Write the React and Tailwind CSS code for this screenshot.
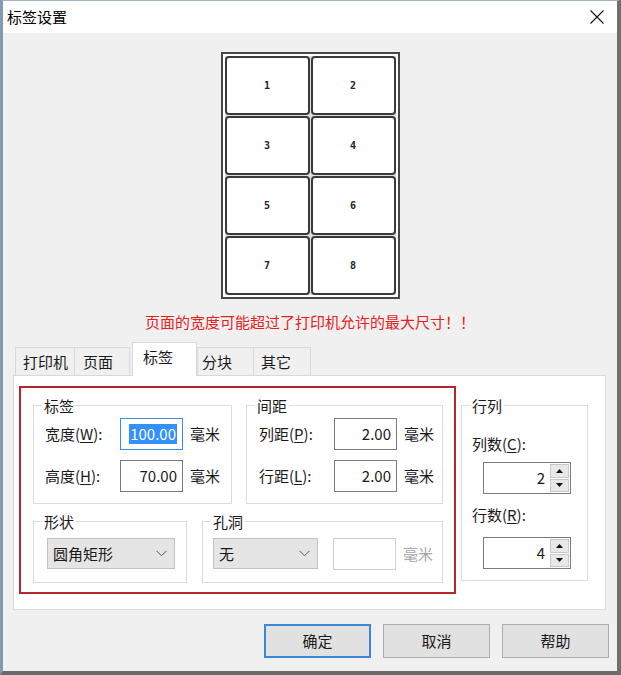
import React from "react";

const cells = [1, 2, 3, 4, 5, 6, 7, 8];

function Group({ title, className = "", children }) {
  return (
    <div className={`relative border border-[#dcdcdc] ${className}`}>
      <span className="absolute -top-[10px] left-[8px] bg-white px-[2px] text-[15px] leading-[20px] text-[#1a1a1a]">
        {title}
      </span>
      {children}
    </div>
  );
}

function Hotkey({ text, k }) {
  return (
    <span className="w-[75px] shrink-0 text-[15px] leading-[20px] text-[#1a1a1a]">
      {text}(<u className="underline-offset-2">{k}</u>):
    </span>
  );
}

function NumBox({ value, focused, selected, disabled }) {
  let border = "border-[#7a7a7a]";
  if (focused) border = "border-[#3d8ee0]";
  if (disabled) border = "border-[#d0d0d0]";
  return (
    <div
      className={`flex h-[32px] w-[63px] shrink-0 items-center justify-end border bg-white pr-[5px] text-[15px] leading-[20px] ${border}`}
    >
      {selected ? (
        <span className="bg-[#3390ff] px-[1px] text-white">{value}</span>
      ) : (
        <span className="text-[#1a1a1a]">{value}</span>
      )}
    </div>
  );
}

function Unit({ muted }) {
  return (
    <span className={`ml-[7px] text-[15px] leading-[20px] ${muted ? "text-[#a6a6a6]" : "text-[#1a1a1a]"}`}>
      毫米
    </span>
  );
}

function Chevron() {
  return (
    <svg width="11" height="7" viewBox="0 0 11 7" className="shrink-0">
      <path d="M0.5 0.8 L5.5 5.8 L10.5 0.8" fill="none" stroke="#555" strokeWidth="1" />
    </svg>
  );
}

function Combo({ text, className }) {
  return (
    <div
      className={`flex h-[31px] items-center justify-between border border-[#c2c2c2] bg-[#e5e5e5] pl-[5px] pr-[7px] text-[15px] leading-[20px] text-[#1a1a1a] ${className}`}
    >
      <span>{text}</span>
      <Chevron />
    </div>
  );
}

function Spinner({ value }) {
  return (
    <div className="ml-[11px] flex h-[32px] w-[88px] items-stretch border border-[#7a7a7a] bg-white">
      <div className="flex flex-1 items-center justify-end pr-[5px] text-[15px] leading-[20px] text-[#1a1a1a]">
        {value}
      </div>
      <div className="my-[1px] mr-[1px] flex w-[19px] flex-col gap-[1px]">
        <div className="flex flex-1 items-center justify-center border border-[#c8c8c8] bg-[#e8e8e8]">
          <svg width="7" height="4" viewBox="0 0 7 4">
            <path d="M0 4 L3.5 0 L7 4 Z" fill="#111" />
          </svg>
        </div>
        <div className="flex flex-1 items-center justify-center border border-[#c8c8c8] bg-[#e8e8e8]">
          <svg width="7" height="4" viewBox="0 0 7 4">
            <path d="M0 0 L3.5 4 L7 0 Z" fill="#111" />
          </svg>
        </div>
      </div>
    </div>
  );
}

function Tab({ label, active, className }) {
  if (active) {
    return (
      <div
        className={`relative z-10 -mb-px h-[34px] border border-b-0 border-[#d9d9d9] bg-white pt-[4px] text-[15px] leading-[20px] text-[#1a1a1a] ${className}`}
      >
        {label}
      </div>
    );
  }
  return (
    <div
      className={`h-[28px] border border-b-0 border-[#d9d9d9] bg-[#f0f0f0] pt-[4px] text-[15px] leading-[20px] text-[#1a1a1a] ${className}`}
    >
      {label}
    </div>
  );
}

function Button({ label, primary }) {
  return (
    <button
      className={`h-[34px] w-[107px] bg-[#e1e1e1] text-[15px] leading-[20px] text-[#1a1a1a] ${
        primary ? "border-2 border-[#3b86d6]" : "border border-[#adadad]"
      }`}
    >
      {label}
    </button>
  );
}

export default function App() {
  return (
    <div className="flex h-[675px] w-[621px] flex-col border-t border-l-[3px] border-r-4 border-b-4 border-t-[#9db1c7] border-l-[#8099b4] border-r-[#6f6f6f] border-b-[#6a6a6a] font-['Noto_Sans_CJK_SC',sans-serif]">
      {/* title bar */}
      <div className="flex h-[32px] shrink-0 items-center justify-between bg-white pl-[4px] pr-[13px]">
        <span className="text-[15px] leading-[20px] text-black">标签设置</span>
        <svg width="14" height="14" viewBox="0 0 14 14">
          <path d="M0.5 0.5 L13.5 13.5 M13.5 0.5 L0.5 13.5" stroke="#111" strokeWidth="1.1" />
        </svg>
      </div>

      <div className="flex flex-1 flex-col bg-[#f0f0f0]">
        {/* label sheet preview */}
        <div className="mt-[19px] self-center border-2 border-[#474747] bg-white p-[2px]">
          <div className="grid grid-cols-2 gap-[1px] bg-[#dedede]">
            {cells.map((n) => (
              <div
                key={n}
                className="flex h-[59px] w-[85px] items-center justify-center rounded-[4px] border-2 border-[#3a3a3a] bg-white font-['DejaVu_Sans_Mono',monospace] text-[10px] font-bold text-[#222]"
              >
                {n}
              </div>
            ))}
          </div>
        </div>

        <p className="mt-[13px] text-center text-[15px] leading-[20px] text-[#e5211d]">
          页面的宽度可能超过了打印机允许的最大尺寸！！
        </p>

        {/* tabs */}
        <div className="ml-[12px] mt-[10px] flex h-[33px] items-end">
          <Tab label="打印机" className="w-[60px] pl-[7px]" />
          <Tab label="页面" className="-ml-px w-[56px] pl-[8px]" />
          <Tab label="标签" active className="ml-[2px] w-[65px] pl-[10px]" />
          <Tab label="分块" className="w-[57px] pl-[4px]" />
          <Tab label="其它" className="-ml-px w-[58px] pl-[7px]" />
        </div>

        <div className="ml-[10px] mr-[11px] flex h-[235px] items-start border border-[#d9d9d9] bg-white">
          <div className="ml-[5px] mt-[10px] flex h-[208px] w-[437px] flex-col border-2 border-[#b3262e] pl-[12px] pt-[17px]">
            <div className="flex gap-[14px]">
              <Group title="标签" className="h-[99px] w-[199px] pl-[11px] pt-[12px]">
                <div className="flex items-center">
                  <Hotkey text="宽度" k="W" />
                  <NumBox value="100.00" focused selected />
                  <Unit />
                </div>
                <div className="mt-[10px] flex items-center">
                  <Hotkey text="高度" k="H" />
                  <NumBox value="70.00" />
                  <Unit />
                </div>
              </Group>
              <Group title="间距" className="h-[99px] w-[197px] pl-[12px] pt-[12px]">
                <div className="flex items-center">
                  <Hotkey text="列距" k="P" />
                  <NumBox value="2.00" />
                  <Unit />
                </div>
                <div className="mt-[10px] flex items-center">
                  <Hotkey text="行距" k="L" />
                  <NumBox value="2.00" />
                  <Unit />
                </div>
              </Group>
            </div>

            <div className="mt-[17px] flex gap-[15px]">
              <Group title="形状" className="h-[62px] w-[154px] pl-[13px] pt-[16px]">
                <Combo text="圆角矩形" className="w-[128px]" />
              </Group>
              <Group title="孔洞" className="flex h-[62px] w-[241px] items-start pl-[10px] pt-[16px]">
                <Combo text="无" className="w-[105px]" />
                <div className="ml-[15px] flex items-center">
                  <NumBox value="" disabled />
                  <Unit muted />
                </div>
              </Group>
            </div>
          </div>

          <Group title="行列" className="ml-[5px] mt-[29px] h-[176px] w-[127px] pl-[10px] pt-[28px]">
            <div className="text-[15px] leading-[20px] text-[#1a1a1a]">
              列数(<u className="underline-offset-2">C</u>):
            </div>
            <div className="mt-[8px]">
              <Spinner value="2" />
            </div>
            <div className="mt-[11px] text-[15px] leading-[20px] text-[#1a1a1a]">
              行数(<u className="underline-offset-2">R</u>):
            </div>
            <div className="mt-[12px]">
              <Spinner value="4" />
            </div>
          </Group>
        </div>

        <div className="mt-[14px] flex justify-end gap-[12px] pr-[8px]">
          <Button label="确定" primary />
          <Button label="取消" />
          <Button label="帮助" />
        </div>
      </div>
    </div>
  );
}
